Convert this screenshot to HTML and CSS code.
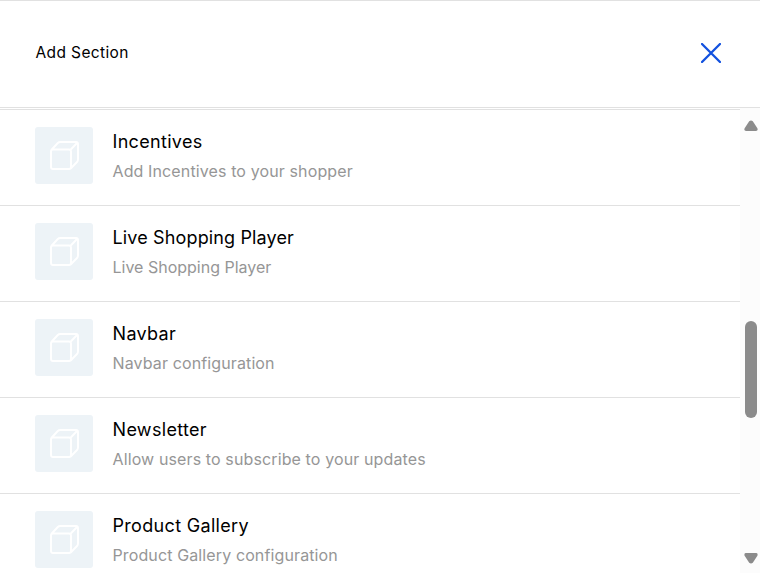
FILE: index.html
```html
<!DOCTYPE html>
<html lang="en">
<head>
<meta charset="utf-8">
<title>Add Section</title>
<link rel="stylesheet" href="styles.css">
</head>
<body>
<svg class="defs" aria-hidden="true">
  <symbol id="cube" viewBox="0 0 29 29">
    <path d="M1.300 9 7.800 2Q8.800 1 10.300 1H26Q28 1 28 3V18.500Q28 20 27 21L20.700 27.500M3 8.500H19Q21 8.500 21 10.500V26Q21 28 19 28H3Q1 28 1 26V10.500Q1 8.500 3 8.500M20.300 9 27.500 1.500"/>
  </symbol>
</svg>
<div class="panel">
  <header class="header">
    <h1 class="heading">Add Section</h1>
    <button class="close" aria-label="Close"><svg width="20" height="20" viewBox="0 0 20 20"><path d="M1 1 19 19M19 1 1 19"/></svg></button>
  </header>
  <main class="body">
    <ul class="list">
      <li class="item"><span class="thumb"><svg class="cube"><use href="#cube"/></svg></span><div><h2 class="title">Incentives</h2><p class="desc">Add Incentives to your shopper</p></div></li>
      <li class="item"><span class="thumb"><svg class="cube"><use href="#cube"/></svg></span><div><h2 class="title snug">Live Shopping Player</h2><p class="desc snug">Live Shopping Player</p></div></li>
      <li class="item"><span class="thumb"><svg class="cube"><use href="#cube"/></svg></span><div><h2 class="title">Navbar</h2><p class="desc">Navbar configuration</p></div></li>
      <li class="item"><span class="thumb"><svg class="cube"><use href="#cube"/></svg></span><div><h2 class="title">Newsletter</h2><p class="desc">Allow users to subscribe to your updates</p></div></li>
      <li class="item"><span class="thumb"><svg class="cube"><use href="#cube"/></svg></span><div><h2 class="title">Product Gallery</h2><p class="desc">Product Gallery configuration</p></div></li>
    </ul>
    <div class="scrollbar">
      <svg class="arrow" width="14" height="12" viewBox="0 0 14 12"><path d="M5.200 1.300Q7-.3 8.800 1.300L13.400 8.300Q14.200 11 12 11H2Q-.2 11 .6 8.300Z"/></svg>
      <div class="handle"></div>
      <svg class="arrow" width="14" height="12" viewBox="0 0 14 12"><path d="M5.200 10.700Q7 12.300 8.800 10.700L13.400 3.700Q14.200 1 12 1H2Q-.2 1 .6 3.700Z"/></svg>
    </div>
  </main>
</div>
</body>
</html>
```
FILE: styles.css
```css
* { box-sizing: border-box; margin: 0; padding: 0; }
body { background: #fff; color: #000; font-family: Inter, "Liberation Sans", sans-serif; overflow: hidden; }
.defs { display: none; }
.panel { height: 573px; display: flex; flex-direction: column; overflow: hidden; border-top: 1px solid #e1e1e1; }
.header { height: 107px; flex: none; display: flex; align-items: center; justify-content: space-between; padding: 0 39.5px 2px 35.5px; border-bottom: 1px solid #e1e1e1; }
.heading { font-size: 15.5px; line-height: 24px; font-weight: 400; letter-spacing: .38px; }
.close { display: flex; border: 0; background: none; }
.close path { fill: none; stroke: #1251df; stroke-width: 2.3; stroke-linecap: round; }
.body { flex: 1; min-height: 0; display: flex; }
.list { flex: 1; list-style: none; padding-top: 1px; overflow: hidden; }
.item { height: 96px; display: flex; gap: 19.5px; padding: 17px 35px 0; border-top: 1px solid #e1e1e1; }
.thumb { width: 58px; height: 57px; flex: none; display: flex; align-items: center; justify-content: center; padding-left: 1px; background: #edf3f7; border-radius: 3px; }
.cube { width: 29px; height: 29px; fill: none; stroke: #fff; stroke-width: 1.9; stroke-linejoin: round; }
.title { padding-top: 1px; font-size: 18px; line-height: 28px; font-weight: 400; letter-spacing: .32px; white-space: nowrap; }
.desc { margin-top: 3px; font-size: 16px; line-height: 24px; font-weight: 400; color: #969696; letter-spacing: .12px; white-space: nowrap; }
.title.snug { letter-spacing: .14px; }
.desc.snug { letter-spacing: 0; }
.scrollbar { width: 20px; flex: none; display: flex; flex-direction: column; align-items: flex-end; background: #fcfcfc; padding: 12px 2px 9px 0; }
.arrow { fill: #8b8b8b; flex: none; display: block; }
.handle { width: 12px; height: 97px; margin: 189px 1px auto 0; border-radius: 6px; background: #8b8b8b; }
```
